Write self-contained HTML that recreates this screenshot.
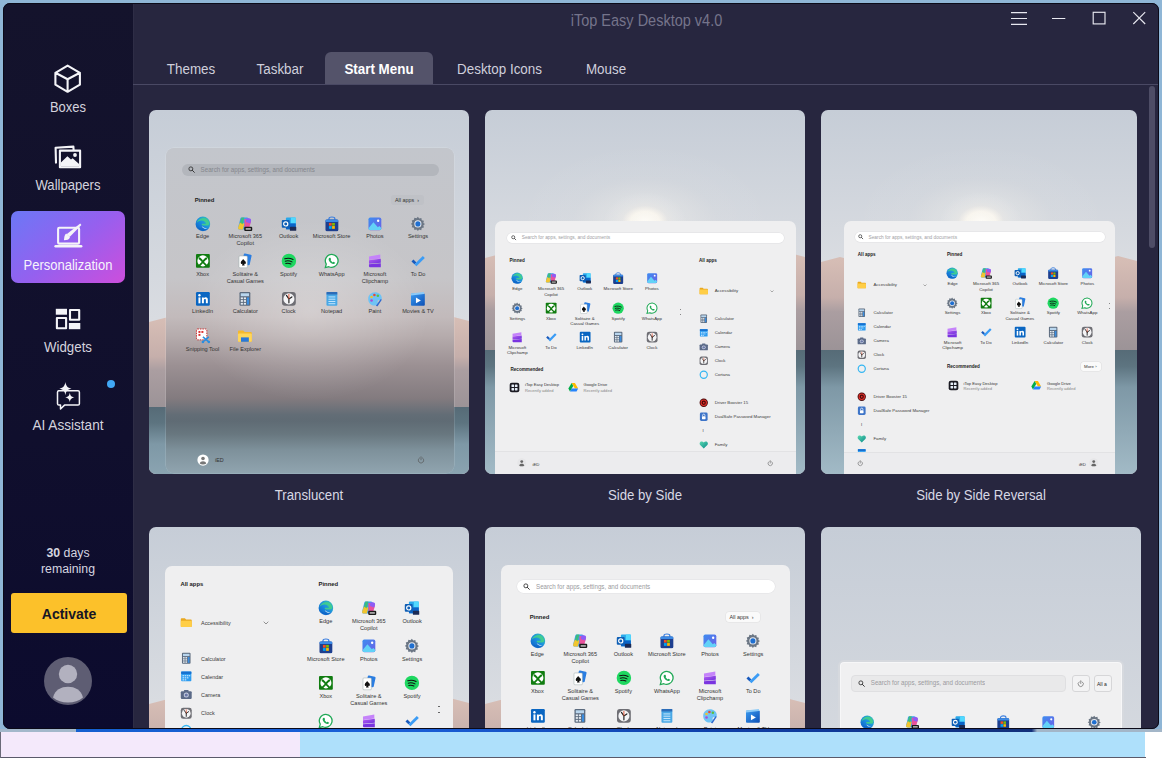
<!DOCTYPE html><html><head><meta charset="utf-8"><style>
*{margin:0;padding:0;box-sizing:border-box}
html,body{width:1162px;height:758px;overflow:hidden;background:#8fb6d6;font-family:"Liberation Sans",sans-serif}
.a{position:absolute}
svg.i{position:absolute;overflow:visible}
#bot1{left:0;top:729px;width:1162px;height:29px;background:#fff}
#lav{left:1px;top:732px;width:299px;height:25px;background:#f4e9fb}
#lblue{left:300px;top:732px;width:845px;height:25px;background:#aee0fb}
#bstrip{left:76px;top:729px;width:1086px;height:3px;background:linear-gradient(90deg,#1560d0,#1a5fd8 30%,#0f3fa8 60%,#12307a 88%,#a3b6c8 88.5%)}
#bstrip0{left:0;top:729px;width:76px;height:3px;background:#a3b8cb}
#bline{left:0;top:757px;width:1146px;height:1px;background:#5a5a6a}
#lgray{left:0;top:732px;width:1px;height:26px;background:#6a6a78}
#win{left:0;top:0;width:1162px;height:758px;clip-path:inset(3px 3px 29px 3px round 7px)}
#side{left:3px;top:3px;width:130px;height:726px;background:linear-gradient(#14132c,#100f2d 60%,#0c0b2e)}
#main{left:133px;top:3px;width:1026px;height:726px;background:#27263f}
#frame{left:3px;top:3px;width:1156px;height:726px;border:1px solid #0b0a18;border-radius:7px}
.title{left:133px;top:12px;width:1026px;text-align:center;color:#75748b;font-size:14.5px;padding-left:1px;transform:scaleY(1.1)}
.tab{top:52px;height:32px;color:#cfcfdc;font-size:13.4px;line-height:35px;text-align:center}
.tab span{display:inline-block;transform:scaleY(1.08);transform-origin:50% 75%}
.tabx{text-align:center}
.tabact{background:#54536a;border-radius:6px 6px 0 0;color:#fff;font-weight:bold}
#tabline{left:133px;top:84px;width:1026px;height:1px;background:#4a4964}
.nav{left:3px;width:130px;text-align:center;color:#d4d3de;font-size:13px;transform:scaleY(1.1);transform-origin:50% 75%}
.card{overflow:hidden;border-radius:7px}
.lbl{text-align:center;color:#d8d8e4;font-size:13.2px;transform:scaleY(1.12);transform-origin:50% 75%}
.t{position:absolute;white-space:nowrap;color:#2a2a2a;line-height:1}
.c{text-align:center}
</style></head><body>

<svg width="0" height="0" style="position:absolute">
<defs>
<linearGradient id="gEdge" x1="0" y1="1" x2="1" y2="0"><stop offset="0" stop-color="#0c59c2"/><stop offset="0.5" stop-color="#1a8fe0"/><stop offset="1" stop-color="#3cc9b0"/></linearGradient>
<linearGradient id="gCop" x1="0" y1="0" x2="1" y2="1"><stop offset="0" stop-color="#2f9bf0"/><stop offset="0.35" stop-color="#5ed06a"/><stop offset="0.55" stop-color="#f7c83a"/><stop offset="0.8" stop-color="#f055a8"/><stop offset="1" stop-color="#8a5cf0"/></linearGradient>
<linearGradient id="gPho" x1="0" y1="0" x2="1" y2="1"><stop offset="0" stop-color="#3d8ef0"/><stop offset="1" stop-color="#6c5ee6"/></linearGradient>
<linearGradient id="gClip" x1="0" y1="0" x2="1" y2="1"><stop offset="0" stop-color="#b65cf5"/><stop offset="1" stop-color="#6b2fd8"/></linearGradient>
<linearGradient id="gMov" x1="0" y1="0" x2="1" y2="1"><stop offset="0" stop-color="#3a9af0"/><stop offset="1" stop-color="#0d4fb5"/></linearGradient>
<linearGradient id="gFam" x1="0" y1="0" x2="1" y2="1"><stop offset="0" stop-color="#5ad8b0"/><stop offset="1" stop-color="#0a8a8a"/></linearGradient>
<symbol id="edge" viewBox="0 0 16 16"><circle cx="8" cy="8" r="7.4" fill="url(#gEdge)"/><path d="M1.2 7.2C1.8 3.5 4.6.8 8 .8c3.5 0 6.6 2.6 7 5.9.2 1.7-.8 3-2.6 3H7.3c0 1.9 1.7 3.1 3.7 3.1 1.2 0 2.3-.4 3.2-.9-1.2 1.9-3.4 3.2-6 3.2C4.5 15.1 2 12.9 2 10c0-2.4 1.9-4.2 4.2-4.2 1.6 0 3 .9 3.6 2.2" fill="none" stroke="none"/><path d="M7.6 9.6h4.6c1.6 0 2.5-1 2.2-2.5C13.8 4 11.2 2 8.2 2 5 2 2.4 4.2 1.5 7.3 2.6 5.6 4.5 4.6 6.6 4.6c2.3 0 4.2 1.4 4.6 3.2H7.3c-.4 0-.6.3-.5.7.1.4.4.7.8 1.1z" fill="#44d08a" opacity=".9"/><path d="M7.3 9.6c0 2 1.8 3.3 4 3.3 1 0 2-.3 2.8-.8-1.1 1.8-3 3-5.4 3-2.5 0-4.6-1.6-5.4-3.9.9 1 2.2 1.5 3.6 1.5-.4-.9-.2-2.1.4-3.1z" fill="#0a58c0" opacity=".5"/><path d="M6.8 9.8c.2 1.7 1.8 3 4 3 .9 0 1.7-.2 2.4-.6-.9.3-1.9.3-2.9 0-1.7-.5-3-1.4-3.5-2.4z" fill="#e8f6ff"/></symbol>
<symbol id="copilot" viewBox="0 0 16 16"><path d="M4.5 1.5h5.5c1.5 0 2.2 1 1.8 2.4L9.8 11.5c-.4 1.4-1.5 2.2-2.9 2.2H3c-1.5 0-2.2-1-1.8-2.4L3 4c.3-1.5 .6-2.5 1.5-2.5z" fill="#3aa0f0"/><path d="M1.2 11.3L3 6.5l4.5 1L6 13.7H3c-1.5 0-2.2-1-1.8-2.4z" fill="#f2c530"/><path d="M3 6.5l1.5-5h3l-1.8 7z" fill="#3ec26a" opacity=".85"/><path d="M7.5 3h4.4c1.6 0 2.6 1.2 2.2 2.7l-1.5 5.6c-.4 1.4-1.4 2.2-2.8 2.2H7.7z" fill="#e8529c"/><path d="M9.5 2.2h2.5c1.6 0 2.6 1.2 2.2 2.7L13.5 7.5 9 6z" fill="#8d5cf6"/><rect x="7.3" y="11" width="8.2" height="4.2" rx="1.2" fill="#1b1b1b"/><rect x="8.8" y="12.4" width="5.2" height="1.4" fill="#cfcfcf"/></symbol>
<symbol id="outlook" viewBox="0 0 16 16"><rect x="5" y="1.5" width="10" height="12" rx="1" fill="#28a8ea"/><rect x="10" y="1.5" width="5" height="6" fill="#50d9ff"/><rect x="5" y="7.5" width="10" height="6" fill="#0a64c8"/><rect x=".8" y="4" width="8" height="8" rx="1" fill="#0f5fb5"/><circle cx="4.8" cy="8" r="2.1" fill="none" stroke="#fff" stroke-width="1.2"/><rect x="9" y="11" width="6.5" height="4" rx=".6" fill="#1b2a55"/></symbol>
<symbol id="store" viewBox="0 0 16 16"><path d="M5 4V2.8C5 1.8 6 1 8 1s3 .8 3 1.8V4" fill="none" stroke="#3a7ee0" stroke-width="1.2"/><rect x="1.5" y="3.5" width="13" height="12" rx="1.6" fill="#1d3f8f"/><rect x="1.5" y="3.5" width="13" height="2.5" rx="1" fill="#3a8ae6"/><rect x="5" y="7" width="2.8" height="2.8" fill="#f25022"/><rect x="8.2" y="7" width="2.8" height="2.8" fill="#7fba00"/><rect x="5" y="10.2" width="2.8" height="2.8" fill="#00a4ef"/><rect x="8.2" y="10.2" width="2.8" height="2.8" fill="#ffb900"/></symbol>
<symbol id="photos" viewBox="0 0 16 16"><rect x="1.5" y="1.5" width="13" height="13" rx="1.8" fill="url(#gPho)"/><path d="M1.5 12.5l5-6.2 4.5 5.2 1.5-1.3 2 2v.3c0 1-.8 1.8-1.8 1.8H3.3c-1 0-1.8-.8-1.8-1.8z" fill="#62d2f7"/><circle cx="11.3" cy="4.8" r="1.2" fill="#fff"/></symbol>
<symbol id="settings" viewBox="0 0 16 16"><path d="M8 .8l1.3 1.8 2.2-.6.4 2.2 2.2.7-.6 2.2L15.2 8l-1.7 1.4.6 2.2-2.2.6-.5 2.3-2.2-.7L8 15.2l-1.3-1.6-2.2.7-.5-2.3-2.2-.6.6-2.2L.8 8l1.6-1.2-.6-2.2 2.2-.7.4-2.2 2.2.6z" fill="#6b7684"/><circle cx="8" cy="8" r="3.6" fill="#e8eaf0"/><circle cx="8" cy="8" r="2.6" fill="#1f6fd0"/></symbol>
<symbol id="xbox" viewBox="0 0 16 16"><rect x="1" y="1" width="14" height="14" rx="1" fill="#107c10"/><circle cx="8" cy="8" r="5.6" fill="#fff"/><path d="M4.2 4.2c2 .6 3 2.2 3.8 3.3.8-1.1 1.8-2.7 3.8-3.3L12.5 6c-1.6.8-2.8 2.2-3.3 3L12.6 12.5l-1.5 1.2C10 12.2 9 11 8 10.3 7 11 6 12.2 4.9 13.7L3.4 12.5 6.8 9c-.5-.8-1.7-2.2-3.3-3z" fill="#107c10"/></symbol>
<symbol id="solitaire" viewBox="0 0 16 16"><rect x="6" y="1" width="8" height="11" rx="1" fill="#2a7de1" transform="rotate(12 10 6)"/><rect x="2" y="3" width="8.5" height="12" rx="1" fill="#fff" stroke="#9aa" stroke-width=".5"/><path d="M6.2 6c1.5 1.8 2.8 2.5 2.8 3.8 0 1-.9 1.5-1.8 1.1l.6 1.8H5l.6-1.8c-.9.4-1.8-.1-1.8-1.1C3.8 8.5 4.9 7.8 6.2 6z" fill="#111"/></symbol>
<symbol id="spotify" viewBox="0 0 16 16"><circle cx="8" cy="8" r="7.3" fill="#1ed760"/><path d="M3.8 5.8c2.8-.9 5.8-.6 8.4.8M4.3 8.3c2.2-.7 4.6-.4 6.8.7M4.8 10.6c1.8-.5 3.5-.3 5.2.5" fill="none" stroke="#111" stroke-width="1.1" stroke-linecap="round"/></symbol>
<symbol id="whatsapp" viewBox="0 0 16 16"><path d="M8 1.3a6.6 6.6 0 00-5.7 10l-1 3.5 3.6-.9A6.6 6.6 0 108 1.3z" fill="#fff" stroke="#1fa855" stroke-width="1.3"/><path d="M5.6 5c.4-.4.8-.3 1 .1l.5 1.1c.1.3 0 .5-.2.7l-.3.3c.5 1 1.3 1.8 2.3 2.3l.3-.3c.2-.2.5-.3.7-.2l1.1.5c.4.2.5.6.1 1-.6.7-1.6.9-2.5.5-1.7-.7-3-2-3.7-3.7-.4-.9-.2-1.8.5-2.5z" fill="#1fa855"/></symbol>
<symbol id="clipchamp" viewBox="0 0 16 16"><path d="M2 3.5L13.5 1.5V5.5L2 7z" fill="#c583fa"/><path d="M2 7.3L14 5.8V10L2 11z" fill="url(#gClip)"/><path d="M2 11.3L14 10.3V14.5H3c-.6 0-1-.4-1-1z" fill="#7a34e0"/></symbol>
<symbol id="todo" viewBox="0 0 16 16"><path d="M1.5 8.5l2-2 3 3-2 2z" fill="#185abd"/><path d="M4.5 11.5L13 3l2 2-8.5 8.5z" fill="#3b9cf5"/></symbol>
<symbol id="linkedin" viewBox="0 0 16 16"><rect x="1" y="1" width="14" height="14" rx="1.2" fill="#0a66c2"/><rect x="3.5" y="6.5" width="2" height="6" fill="#fff"/><circle cx="4.5" cy="4.3" r="1.2" fill="#fff"/><path d="M7 6.5h1.9v.9c.4-.7 1.1-1.1 2-1.1 1.6 0 2.1 1 2.1 2.6v3.6h-2V9.3c0-.8-.2-1.3-.9-1.3-.8 0-1.1.6-1.1 1.4v3.1H7z" fill="#fff"/></symbol>
<symbol id="calculator" viewBox="0 0 16 16"><rect x="2.5" y="1" width="11" height="14" rx="1.2" fill="#5c6b7e"/><rect x="3.8" y="2.3" width="8.4" height="3" fill="#b9d6ee"/><g fill="#e6ecf2"><rect x="3.8" y="6.5" width="2.2" height="1.8"/><rect x="6.9" y="6.5" width="2.2" height="1.8"/><rect x="3.8" y="9.2" width="2.2" height="1.8"/><rect x="6.9" y="9.2" width="2.2" height="1.8"/><rect x="3.8" y="12" width="2.2" height="1.8"/><rect x="6.9" y="12" width="2.2" height="1.8"/></g><rect x="10" y="6.5" width="2.2" height="7.3" fill="#3b8de0"/></symbol>
<symbol id="clock" viewBox="0 0 16 16"><rect x="1" y="1" width="14" height="14" rx="3" fill="#6e6e74"/><circle cx="8" cy="8" r="5.6" fill="#f4f4f6"/><path d="M8 8L5.5 4.5M8 8l3-2M8 8v4" stroke="#222" stroke-width="1.2" stroke-linecap="round"/><path d="M8 8V3" stroke="#e04a2a" stroke-width=".9"/></symbol>
<symbol id="notepad" viewBox="0 0 16 16"><rect x="2.5" y="2" width="11" height="13" rx="1" fill="#49a8e6"/><rect x="2.5" y="1" width="11" height="2.5" fill="#2b6cb8"/><g stroke="#d8efff" stroke-width=".9"><path d="M4.5 6h7M4.5 8.3h7M4.5 10.6h7M4.5 12.9h7"/></g></symbol>
<symbol id="paint" viewBox="0 0 16 16"><path d="M8 1.2c3.9 0 7 2.6 7 6 0 2-1.4 2.6-2.6 2.3-1.2-.3-2 .4-1.6 1.6.5 1.8-.6 3.7-3 3.7-3.8 0-6.6-3-6.6-6.8S4 1.2 8 1.2z" fill="#6fc3f5"/><circle cx="4.6" cy="6" r="1.3" fill="#f2c12e"/><circle cx="7.5" cy="4" r="1.3" fill="#e8493a"/><circle cx="11" cy="4.8" r="1.3" fill="#5bbf3e"/><circle cx="4.6" cy="9.6" r="1.3" fill="#a74fd8"/><path d="M9 15l5-7 1 .8-4.5 7z" fill="#2d68d0"/></symbol>
<symbol id="movies" viewBox="0 0 16 16"><rect x="1" y="2.5" width="14" height="12.5" rx="1" fill="url(#gMov)"/><path d="M1 2.5l13-1.5.3 2L1 4.5z" fill="#8ccaf7"/><path d="M6 6.5v6l5-3z" fill="#fff"/></symbol>
<symbol id="snipping" viewBox="0 0 16 16"><rect x="1.5" y="1" width="10.5" height="11" rx="1" fill="#fff" stroke="#c33" stroke-width="1" stroke-dasharray="1.5 1"/><rect x="3.5" y="3" width="2" height="2" fill="#d33"/><rect x="6.5" y="3" width="2" height="2" fill="#d33"/><rect x="3.5" y="6" width="2" height="2" fill="#d33"/><path d="M8 9l6 5M14 9l-6 5" stroke="#2a8ee0" stroke-width="1.5"/><circle cx="8" cy="14.2" r="1.3" fill="#2a8ee0"/><circle cx="14" cy="14.2" r="1.3" fill="#2a8ee0"/></symbol>
<symbol id="explorer" viewBox="0 0 16 16"><path d="M1 3.5c0-.6.4-1 1-1h4.3l1.5 1.5H14c.6 0 1 .4 1 1V13c0 .6-.4 1-1 1H2c-.6 0-1-.4-1-1z" fill="#f5b92e"/><rect x="1" y="5.5" width="14" height="8.5" rx="1" fill="#ffd65a"/><rect x="4" y="9.5" width="8" height="4.5" fill="#2b78d8"/></symbol>
<symbol id="folder" viewBox="0 0 16 16"><path d="M1 4c0-.6.4-1 1-1h4.3l1.5 1.5H14c.6 0 1 .4 1 1V13c0 .6-.4 1-1 1H2c-.6 0-1-.4-1-1z" fill="#e9a820"/><rect x="1" y="6" width="14" height="8" rx="1" fill="#ffce47"/></symbol>
<symbol id="calendar" viewBox="0 0 16 16"><rect x="1.5" y="2" width="13" height="12.5" rx="1" fill="#2d9cf0"/><rect x="1.5" y="2" width="13" height="3" fill="#1670cf"/><g fill="#bfe3ff"><rect x="3.2" y="6.5" width="2" height="1.6"/><rect x="6" y="6.5" width="2" height="1.6"/><rect x="8.8" y="6.5" width="2" height="1.6"/><rect x="11.5" y="6.5" width="1.6" height="1.6"/><rect x="3.2" y="9.2" width="2" height="1.6"/><rect x="6" y="9.2" width="2" height="1.6"/><rect x="8.8" y="9.2" width="2" height="1.6"/><rect x="3.2" y="11.8" width="2" height="1.6"/><rect x="6" y="11.8" width="2" height="1.6"/></g></symbol>
<symbol id="camera" viewBox="0 0 16 16"><rect x="1" y="4" width="14" height="10" rx="1.5" fill="#5b6a88"/><rect x="5" y="2.5" width="6" height="2.5" rx=".8" fill="#5b6a88"/><circle cx="8" cy="9" r="3.2" fill="#c4cce0"/><circle cx="8" cy="9" r="2" fill="#6b78a8"/></symbol>
<symbol id="cortana" viewBox="0 0 16 16"><circle cx="8" cy="8" r="6" fill="none" stroke="#35b6f2" stroke-width="2"/></symbol>
<symbol id="driver" viewBox="0 0 16 16"><circle cx="8" cy="8" r="7" fill="#4a0a0a"/><circle cx="8" cy="8" r="4.5" fill="none" stroke="#e0302a" stroke-width="1.8"/><circle cx="8" cy="8" r="1.5" fill="#e0302a"/></symbol>
<symbol id="dualsafe" viewBox="0 0 16 16"><rect x="1.5" y="1" width="13" height="14" rx="2.5" fill="#3d74c8"/><rect x="5" y="7" width="6" height="5" rx=".8" fill="#fff"/><path d="M6 7V5.5a2 2 0 014 0V7" fill="none" stroke="#fff" stroke-width="1.2"/></symbol>
<symbol id="family" viewBox="0 0 16 16"><path d="M8 14.5L2 8.5C.5 7 .8 4.2 2.6 3.1 4.3 2 6.5 2.6 8 4.2c1.5-1.6 3.7-2.2 5.4-1.1 1.8 1.1 2.1 3.9.6 5.4z" fill="url(#gFam)"/></symbol>
<symbol id="itop" viewBox="0 0 16 16"><rect x="1" y="1" width="14" height="14" rx="3" fill="#1a1a22"/><g fill="#e6eef8"><rect x="3.6" y="3.6" width="3.8" height="3.8" rx=".6"/><rect x="8.6" y="3.6" width="3.8" height="3.8" rx=".6"/><rect x="3.6" y="8.6" width="3.8" height="3.8" rx=".6"/><rect x="8.6" y="8.6" width="3.8" height="3.8" rx=".6"/></g></symbol>
<symbol id="gdrive" viewBox="0 0 16 16"><path d="M5.5 1.5h5L15.5 10h-5z" fill="#ffba00"/><path d="M5.5 1.5L.5 10 3 14.5 8 6z" fill="#00ac47"/><path d="M3 14.5h10l2.5-4.5h-10z" fill="#2684fc"/></symbol>
<symbol id="power" viewBox="0 0 16 16"><path d="M5 3.8a5.5 5.5 0 106 0" fill="none" stroke="#555" stroke-width="1.3" stroke-linecap="round"/><path d="M8 1.5v6" stroke="#555" stroke-width="1.3" stroke-linecap="round"/></symbol>
<symbol id="search" viewBox="0 0 16 16"><circle cx="6.5" cy="6.5" r="4.5" fill="none" stroke="#333" stroke-width="2"/><path d="M10 10l4.5 4.5" stroke="#333" stroke-width="2.2" stroke-linecap="round"/></symbol>
<symbol id="user" viewBox="0 0 16 16"><circle cx="8" cy="8" r="7.5" fill="#fff"/><circle cx="8" cy="6" r="2.4" fill="#777"/><path d="M3.6 12.5c.6-2 2.3-3 4.4-3s3.8 1 4.4 3c-1.2 1-2.7 1.5-4.4 1.5s-3.2-.5-4.4-1.5z" fill="#777"/></symbol>
<symbol id="user2" viewBox="0 0 16 16"><circle cx="8" cy="8" r="7.5" fill="#e6e6e8"/><circle cx="8" cy="6" r="2.4" fill="#666"/><path d="M3.6 12.5c.6-2 2.3-3 4.4-3s3.8 1 4.4 3c-1.2 1-2.7 1.5-4.4 1.5s-3.2-.5-4.4-1.5z" fill="#666"/></symbol>
</defs></svg>

<div class="a" id="bot1"></div><div class="a" id="lav"></div><div class="a" id="lblue"></div><div class="a" id="bstrip"></div><div class="a" id="bstrip0"></div><div class="a" id="bline"></div><div class="a" id="lgray"></div>
<div class="a" id="win">
<div class="a" id="side"></div><div class="a" id="main"></div><div class="a" style="left:133px;top:3px;width:1px;height:726px;background:#2e2d46"></div>
<div class="a title">iTop Easy Desktop v4.0</div>
<div class="a tab" style="left:147px;width:88px"><span>Themes</span></div>
<div class="a tab" style="left:236px;width:88px"><span>Taskbar</span></div>
<div class="a tab tabact" style="left:325px;width:108px"><span>Start Menu</span></div>
<div class="a tab" style="left:433px;width:133px"><span>Desktop Icons</span></div>
<div class="a tab" style="left:566px;width:80px"><span>Mouse</span></div>
<div class="a" id="tabline"></div>
<svg class="a" style="left:1000px;top:0" width="160" height="40"><g stroke="#e8e8f0" stroke-width="1.15" fill="none"><path d="M11 12.6H27M11 18.5H27M11 24.4H27"/><path d="M52 18.5H65.3"/><rect x="93.2" y="12.3" width="11.8" height="11.6"/><path d="M133.3 12.2L145.2 24M145.2 12.2L133.3 24"/></g></svg>
<div class="a" style="left:1149px;top:86px;width:6px;height:162px;border-radius:3px;background:#4e4d66"></div>
<div class="a card" style="left:149px;top:110px;width:320px;height:364px">
<svg class="a" style="left:0px;top:0px" width="320" height="364">
<defs><linearGradient id="sky0" x1="0" y1="0" x2="0" y2="1"><stop offset="0" stop-color="#c6cdd7"/><stop offset="0.577" stop-color="#d9dce1"/><stop offset="1" stop-color="#d9dce1"/></linearGradient>
<radialGradient id="sun0"><stop offset="0" stop-color="#fffdf8" stop-opacity="1"/><stop offset=".35" stop-color="#fffaf0" stop-opacity=".85"/><stop offset=".55" stop-color="#fff6ea" stop-opacity=".25"/><stop offset="1" stop-color="#fff" stop-opacity="0"/></radialGradient>
<linearGradient id="dn0" x1="0" y1="210" x2="0" y2="301" gradientUnits="userSpaceOnUse"><stop offset="0" stop-color="#d6bdb5"/><stop offset=".4" stop-color="#c6afab"/><stop offset=".55" stop-color="#ab9ea1"/><stop offset="1" stop-color="#9a9296"/></linearGradient>
<linearGradient id="lk0" x1="0" y1="297" x2="0" y2="421" gradientUnits="userSpaceOnUse"><stop offset="0" stop-color="#566b77"/><stop offset=".13" stop-color="#5d7480"/><stop offset=".3" stop-color="#7e98a6"/><stop offset="1" stop-color="#a2bac6"/></linearGradient></defs>
<rect width="320" height="364" fill="url(#sky0)"/>
<ellipse cx="160" cy="150" rx="42" ry="30" fill="url(#sun0)" opacity=".95"/>
<ellipse cx="160" cy="150" rx="130" ry="80" fill="url(#sun0)" opacity=".22"/>
<path d="M0 212 L19.2 207 L64.0 218 L134.4 276 L185.6 276 L262.4 216 L300.79999999999995 206 L320 211 L320 301 L0 301z" fill="url(#dn0)"/>
<rect y="297" width="320" height="67" fill="url(#lk0)"/>
</svg>
</div>
<div class="a card" style="left:485px;top:110px;width:320px;height:364px">
<svg class="a" style="left:0px;top:0px" width="320" height="364">
<defs><linearGradient id="sky1" x1="0" y1="0" x2="0" y2="1"><stop offset="0" stop-color="#c6cdd7"/><stop offset="0.401" stop-color="#d9dce1"/><stop offset="1" stop-color="#d9dce1"/></linearGradient>
<radialGradient id="sun1"><stop offset="0" stop-color="#fffdf8" stop-opacity="1"/><stop offset=".35" stop-color="#fffaf0" stop-opacity=".85"/><stop offset=".55" stop-color="#fff6ea" stop-opacity=".25"/><stop offset="1" stop-color="#fff" stop-opacity="0"/></radialGradient>
<linearGradient id="dn1" x1="0" y1="146" x2="0" y2="244" gradientUnits="userSpaceOnUse"><stop offset="0" stop-color="#d6bdb5"/><stop offset=".4" stop-color="#c6afab"/><stop offset=".55" stop-color="#ab9ea1"/><stop offset="1" stop-color="#9a9296"/></linearGradient>
<linearGradient id="lk1" x1="0" y1="240" x2="0" y2="364" gradientUnits="userSpaceOnUse"><stop offset="0" stop-color="#566b77"/><stop offset=".13" stop-color="#5d7480"/><stop offset=".3" stop-color="#7e98a6"/><stop offset="1" stop-color="#a2bac6"/></linearGradient></defs>
<rect width="320" height="364" fill="url(#sky1)"/>
<ellipse cx="160" cy="112" rx="42" ry="30" fill="url(#sun1)" opacity=".95"/>
<ellipse cx="160" cy="112" rx="130" ry="80" fill="url(#sun1)" opacity=".22"/>
<path d="M0 148 L19.2 143 L64.0 154 L134.4 219 L185.6 219 L262.4 152 L300.79999999999995 142 L320 147 L320 244 L0 244z" fill="url(#dn1)"/>
<rect y="240" width="320" height="124" fill="url(#lk1)"/>
</svg>
</div>
<div class="a card" style="left:821px;top:110px;width:316px;height:364px">
<svg class="a" style="left:0px;top:0px" width="316" height="364">
<defs><linearGradient id="sky2" x1="0" y1="0" x2="0" y2="1"><stop offset="0" stop-color="#c6cdd7"/><stop offset="0.412" stop-color="#d9dce1"/><stop offset="1" stop-color="#d9dce1"/></linearGradient>
<radialGradient id="sun2"><stop offset="0" stop-color="#fffdf8" stop-opacity="1"/><stop offset=".35" stop-color="#fffaf0" stop-opacity=".85"/><stop offset=".55" stop-color="#fff6ea" stop-opacity=".25"/><stop offset="1" stop-color="#fff" stop-opacity="0"/></radialGradient>
<linearGradient id="dn2" x1="0" y1="150" x2="0" y2="244" gradientUnits="userSpaceOnUse"><stop offset="0" stop-color="#d6bdb5"/><stop offset=".4" stop-color="#c6afab"/><stop offset=".55" stop-color="#ab9ea1"/><stop offset="1" stop-color="#9a9296"/></linearGradient>
<linearGradient id="lk2" x1="0" y1="240" x2="0" y2="364" gradientUnits="userSpaceOnUse"><stop offset="0" stop-color="#566b77"/><stop offset=".13" stop-color="#5d7480"/><stop offset=".3" stop-color="#7e98a6"/><stop offset="1" stop-color="#a2bac6"/></linearGradient></defs>
<rect width="316" height="364" fill="url(#sky2)"/>
<ellipse cx="160" cy="112" rx="42" ry="30" fill="url(#sun2)" opacity=".95"/>
<ellipse cx="160" cy="112" rx="130" ry="80" fill="url(#sun2)" opacity=".22"/>
<path d="M0 152 L18.96 147 L63.2 158 L132.72 219 L183.28 219 L259.12 156 L297.03999999999996 146 L316 151 L316 244 L0 244z" fill="url(#dn2)"/>
<rect y="240" width="316" height="124" fill="url(#lk2)"/>
</svg>
</div>
<div class="a card" style="left:149px;top:527px;width:320px;height:364px">
<svg class="a" style="left:0px;top:0px" width="320" height="364">
<defs><linearGradient id="sky3" x1="0" y1="0" x2="0" y2="1"><stop offset="0" stop-color="#c6cdd7"/><stop offset="0.481" stop-color="#d9dce1"/><stop offset="1" stop-color="#d9dce1"/></linearGradient>
<radialGradient id="sun3"><stop offset="0" stop-color="#fffdf8" stop-opacity="1"/><stop offset=".35" stop-color="#fffaf0" stop-opacity=".85"/><stop offset=".55" stop-color="#fff6ea" stop-opacity=".25"/><stop offset="1" stop-color="#fff" stop-opacity="0"/></radialGradient>
<linearGradient id="dn3" x1="0" y1="175" x2="0" y2="262" gradientUnits="userSpaceOnUse"><stop offset="0" stop-color="#d6bdb5"/><stop offset=".4" stop-color="#c6afab"/><stop offset=".55" stop-color="#ab9ea1"/><stop offset="1" stop-color="#9a9296"/></linearGradient>
<linearGradient id="lk3" x1="0" y1="258" x2="0" y2="382" gradientUnits="userSpaceOnUse"><stop offset="0" stop-color="#566b77"/><stop offset=".13" stop-color="#5d7480"/><stop offset=".3" stop-color="#7e98a6"/><stop offset="1" stop-color="#a2bac6"/></linearGradient></defs>
<rect width="320" height="364" fill="url(#sky3)"/>
<ellipse cx="160" cy="150" rx="42" ry="30" fill="url(#sun3)" opacity=".95"/>
<ellipse cx="160" cy="150" rx="130" ry="80" fill="url(#sun3)" opacity=".22"/>
<path d="M0 177 L19.2 172 L64.0 183 L134.4 237 L185.6 237 L262.4 181 L300.79999999999995 171 L320 176 L320 262 L0 262z" fill="url(#dn3)"/>
<rect y="258" width="320" height="106" fill="url(#lk3)"/>
</svg>
</div>
<div class="a card" style="left:485px;top:527px;width:320px;height:364px">
<svg class="a" style="left:0px;top:0px" width="320" height="364">
<defs><linearGradient id="sky4" x1="0" y1="0" x2="0" y2="1"><stop offset="0" stop-color="#c6cdd7"/><stop offset="0.481" stop-color="#d9dce1"/><stop offset="1" stop-color="#d9dce1"/></linearGradient>
<radialGradient id="sun4"><stop offset="0" stop-color="#fffdf8" stop-opacity="1"/><stop offset=".35" stop-color="#fffaf0" stop-opacity=".85"/><stop offset=".55" stop-color="#fff6ea" stop-opacity=".25"/><stop offset="1" stop-color="#fff" stop-opacity="0"/></radialGradient>
<linearGradient id="dn4" x1="0" y1="175" x2="0" y2="262" gradientUnits="userSpaceOnUse"><stop offset="0" stop-color="#d6bdb5"/><stop offset=".4" stop-color="#c6afab"/><stop offset=".55" stop-color="#ab9ea1"/><stop offset="1" stop-color="#9a9296"/></linearGradient>
<linearGradient id="lk4" x1="0" y1="258" x2="0" y2="382" gradientUnits="userSpaceOnUse"><stop offset="0" stop-color="#566b77"/><stop offset=".13" stop-color="#5d7480"/><stop offset=".3" stop-color="#7e98a6"/><stop offset="1" stop-color="#a2bac6"/></linearGradient></defs>
<rect width="320" height="364" fill="url(#sky4)"/>
<ellipse cx="160" cy="150" rx="42" ry="30" fill="url(#sun4)" opacity=".95"/>
<ellipse cx="160" cy="150" rx="130" ry="80" fill="url(#sun4)" opacity=".22"/>
<path d="M0 177 L19.2 172 L64.0 183 L134.4 237 L185.6 237 L262.4 181 L300.79999999999995 171 L320 176 L320 262 L0 262z" fill="url(#dn4)"/>
<rect y="258" width="320" height="106" fill="url(#lk4)"/>
</svg>
</div>
<div class="a card" style="left:821px;top:527px;width:320px;height:364px">
<svg class="a" style="left:0px;top:0px" width="320" height="364">
<defs><linearGradient id="sky5" x1="0" y1="0" x2="0" y2="1"><stop offset="0" stop-color="#c6cdd7"/><stop offset="0.755" stop-color="#d9dce1"/><stop offset="1" stop-color="#d9dce1"/></linearGradient>
<radialGradient id="sun5"><stop offset="0" stop-color="#fffdf8" stop-opacity="1"/><stop offset=".35" stop-color="#fffaf0" stop-opacity=".85"/><stop offset=".55" stop-color="#fff6ea" stop-opacity=".25"/><stop offset="1" stop-color="#fff" stop-opacity="0"/></radialGradient>
<linearGradient id="dn5" x1="0" y1="275" x2="0" y2="330" gradientUnits="userSpaceOnUse"><stop offset="0" stop-color="#d6bdb5"/><stop offset=".4" stop-color="#c6afab"/><stop offset=".55" stop-color="#ab9ea1"/><stop offset="1" stop-color="#9a9296"/></linearGradient>
<linearGradient id="lk5" x1="0" y1="326" x2="0" y2="450" gradientUnits="userSpaceOnUse"><stop offset="0" stop-color="#566b77"/><stop offset=".13" stop-color="#5d7480"/><stop offset=".3" stop-color="#7e98a6"/><stop offset="1" stop-color="#a2bac6"/></linearGradient></defs>
<rect width="320" height="364" fill="url(#sky5)"/>
<ellipse cx="160" cy="420" rx="42" ry="30" fill="url(#sun5)" opacity=".95"/>
<ellipse cx="160" cy="420" rx="130" ry="80" fill="url(#sun5)" opacity=".22"/>
<path d="M0 277 L19.2 272 L64.0 283 L134.4 305 L185.6 305 L262.4 281 L300.79999999999995 271 L320 276 L320 330 L0 330z" fill="url(#dn5)"/>
<rect y="326" width="320" height="38" fill="url(#lk5)"/>
</svg>
</div>
<div class="a" style="left:166px;top:148px;width:288px;height:325px;border-radius:8px;background:radial-gradient(ellipse 120px 90px at 50% 50%,rgba(255,255,255,.28),rgba(255,255,255,0)),linear-gradient(#c3c6cc 0%,#c6c5c8 40%,#c2babb 52%,#b5abac 58%,#9b9093 67%,#837b7f 77%,#636d76 82%,#5f6b74 84%,#68777f 88%,#7e919b 93%,#90a4af 100%);box-shadow:0 0 0 .5px rgba(255,255,255,.25)"></div>
<div class="a" style="left:181.5px;top:163.5px;width:257.5px;height:12.5px;border-radius:6px;background:#b3b6bc"></div>
<svg class="i" style="left:188.00px;top:166.30px" width="7.00" height="7.00"><use href="#search"/></svg>
<div class="t" style="left:200.60px;top:166.89px;font-size:6.20px;color:#85878d;transform:scaleY(1.12)">Search for apps, settings, and documents</div>
<div class="t" style="left:194.70px;top:197.99px;font-size:5.90px;color:#222;font-weight:bold;">Pinned</div>
<div class="a" style="left:391px;top:195px;width:33px;height:10px;border-radius:3px;background:#bfc1c6"></div>
<div class="t" style="left:395.00px;top:198.16px;font-size:5.40px;color:#333;">All apps &nbsp;›</div>
<svg class="i" style="left:194.70px;top:215.60px" width="15.80" height="15.80"><use href="#edge"/></svg>
<div class="t c" style="left:162.60px;width:80px;top:233.40px;font-size:5.60px;line-height:7.10px;color:#333">Edge</div>
<svg class="i" style="left:237.40px;top:215.60px" width="15.80" height="15.80"><use href="#copilot"/></svg>
<div class="t c" style="left:205.30px;width:80px;top:233.40px;font-size:5.60px;line-height:7.10px;color:#333">Microsoft 365<br>Copilot</div>
<svg class="i" style="left:280.70px;top:215.60px" width="15.80" height="15.80"><use href="#outlook"/></svg>
<div class="t c" style="left:248.60px;width:80px;top:233.40px;font-size:5.60px;line-height:7.10px;color:#333">Outlook</div>
<svg class="i" style="left:323.70px;top:215.60px" width="15.80" height="15.80"><use href="#store"/></svg>
<div class="t c" style="left:291.60px;width:80px;top:233.40px;font-size:5.60px;line-height:7.10px;color:#333">Microsoft Store</div>
<svg class="i" style="left:367.00px;top:215.60px" width="15.80" height="15.80"><use href="#photos"/></svg>
<div class="t c" style="left:334.90px;width:80px;top:233.40px;font-size:5.60px;line-height:7.10px;color:#333">Photos</div>
<svg class="i" style="left:410.10px;top:215.60px" width="15.80" height="15.80"><use href="#settings"/></svg>
<div class="t c" style="left:378.00px;width:80px;top:233.40px;font-size:5.60px;line-height:7.10px;color:#333">Settings</div>
<svg class="i" style="left:194.70px;top:253.10px" width="15.80" height="15.80"><use href="#xbox"/></svg>
<div class="t c" style="left:162.60px;width:80px;top:270.90px;font-size:5.60px;line-height:7.10px;color:#333">Xbox</div>
<svg class="i" style="left:237.40px;top:253.10px" width="15.80" height="15.80"><use href="#solitaire"/></svg>
<div class="t c" style="left:205.30px;width:80px;top:270.90px;font-size:5.60px;line-height:7.10px;color:#333">Solitaire &amp;<br>Casual Games</div>
<svg class="i" style="left:280.70px;top:253.10px" width="15.80" height="15.80"><use href="#spotify"/></svg>
<div class="t c" style="left:248.60px;width:80px;top:270.90px;font-size:5.60px;line-height:7.10px;color:#333">Spotify</div>
<svg class="i" style="left:323.70px;top:253.10px" width="15.80" height="15.80"><use href="#whatsapp"/></svg>
<div class="t c" style="left:291.60px;width:80px;top:270.90px;font-size:5.60px;line-height:7.10px;color:#333">WhatsApp</div>
<svg class="i" style="left:367.00px;top:253.10px" width="15.80" height="15.80"><use href="#clipchamp"/></svg>
<div class="t c" style="left:334.90px;width:80px;top:270.90px;font-size:5.60px;line-height:7.10px;color:#333">Microsoft<br>Clipchamp</div>
<svg class="i" style="left:410.10px;top:253.10px" width="15.80" height="15.80"><use href="#todo"/></svg>
<div class="t c" style="left:378.00px;width:80px;top:270.90px;font-size:5.60px;line-height:7.10px;color:#333">To Do</div>
<svg class="i" style="left:194.70px;top:290.60px" width="15.80" height="15.80"><use href="#linkedin"/></svg>
<div class="t c" style="left:162.60px;width:80px;top:308.40px;font-size:5.60px;line-height:7.10px;color:#333">LinkedIn</div>
<svg class="i" style="left:237.40px;top:290.60px" width="15.80" height="15.80"><use href="#calculator"/></svg>
<div class="t c" style="left:205.30px;width:80px;top:308.40px;font-size:5.60px;line-height:7.10px;color:#333">Calculator</div>
<svg class="i" style="left:280.70px;top:290.60px" width="15.80" height="15.80"><use href="#clock"/></svg>
<div class="t c" style="left:248.60px;width:80px;top:308.40px;font-size:5.60px;line-height:7.10px;color:#333">Clock</div>
<svg class="i" style="left:323.70px;top:290.60px" width="15.80" height="15.80"><use href="#notepad"/></svg>
<div class="t c" style="left:291.60px;width:80px;top:308.40px;font-size:5.60px;line-height:7.10px;color:#333">Notepad</div>
<svg class="i" style="left:367.00px;top:290.60px" width="15.80" height="15.80"><use href="#paint"/></svg>
<div class="t c" style="left:334.90px;width:80px;top:308.40px;font-size:5.60px;line-height:7.10px;color:#333">Paint</div>
<svg class="i" style="left:410.10px;top:290.60px" width="15.80" height="15.80"><use href="#movies"/></svg>
<div class="t c" style="left:378.00px;width:80px;top:308.40px;font-size:5.60px;line-height:7.10px;color:#333">Movies &amp; TV</div>
<svg class="i" style="left:194.70px;top:328.10px" width="15.80" height="15.80"><use href="#snipping"/></svg>
<div class="t c" style="left:162.60px;width:80px;top:345.90px;font-size:5.60px;line-height:7.10px;color:#333">Snipping Tool</div>
<svg class="i" style="left:237.40px;top:328.10px" width="15.80" height="15.80"><use href="#explorer"/></svg>
<div class="t c" style="left:205.30px;width:80px;top:345.90px;font-size:5.60px;line-height:7.10px;color:#333">File Explorer</div>
<svg class="i" style="left:196.50px;top:453.50px" width="12.00" height="12.00"><use href="#user"/></svg>
<div class="t" style="left:215.00px;top:457.66px;font-size:5.40px;color:#333;">iED</div>
<svg class="i" style="left:417.00px;top:455.50px" width="8.00" height="8.00"><use href="#power"/></svg>
<div class="a" style="left:495px;top:220.5px;width:300.5px;height:253.5px;background:#efeff0;border-radius:7px 7px 0 0;"></div>
<div class="a" style="left:506.5px;top:232.5px;width:277px;height:10px;border-radius:5px;background:#fff;box-shadow:0 0 0 .5px #e0e0e2"></div>
<svg class="i" style="left:510.75px;top:234.75px" width="5.50" height="5.50"><use href="#search"/></svg>
<div class="t" style="left:521.70px;top:235.97px;font-size:4.80px;color:#a0a0a4;">Search for apps, settings, and documents</div>
<div class="t" style="left:509.50px;top:258.74px;font-size:4.60px;color:#222;font-weight:bold;">Pinned</div>
<svg class="i" style="left:511.14px;top:272.34px" width="12.32" height="12.32"><use href="#edge"/></svg>
<div class="t c" style="left:477.30px;width:80px;top:286.22px;font-size:4.37px;line-height:5.54px;color:#333">Edge</div>
<svg class="i" style="left:544.84px;top:272.34px" width="12.32" height="12.32"><use href="#copilot"/></svg>
<div class="t c" style="left:511.00px;width:80px;top:286.22px;font-size:4.37px;line-height:5.54px;color:#333">Microsoft 365<br>Copilot</div>
<svg class="i" style="left:578.54px;top:272.34px" width="12.32" height="12.32"><use href="#outlook"/></svg>
<div class="t c" style="left:544.70px;width:80px;top:286.22px;font-size:4.37px;line-height:5.54px;color:#333">Outlook</div>
<svg class="i" style="left:612.04px;top:272.34px" width="12.32" height="12.32"><use href="#store"/></svg>
<div class="t c" style="left:578.20px;width:80px;top:286.22px;font-size:4.37px;line-height:5.54px;color:#333">Microsoft Store</div>
<svg class="i" style="left:645.74px;top:272.34px" width="12.32" height="12.32"><use href="#photos"/></svg>
<div class="t c" style="left:611.90px;width:80px;top:286.22px;font-size:4.37px;line-height:5.54px;color:#333">Photos</div>
<svg class="i" style="left:511.14px;top:301.64px" width="12.32" height="12.32"><use href="#settings"/></svg>
<div class="t c" style="left:477.30px;width:80px;top:315.52px;font-size:4.37px;line-height:5.54px;color:#333">Settings</div>
<svg class="i" style="left:544.84px;top:301.64px" width="12.32" height="12.32"><use href="#xbox"/></svg>
<div class="t c" style="left:511.00px;width:80px;top:315.52px;font-size:4.37px;line-height:5.54px;color:#333">Xbox</div>
<svg class="i" style="left:578.54px;top:301.64px" width="12.32" height="12.32"><use href="#solitaire"/></svg>
<div class="t c" style="left:544.70px;width:80px;top:315.52px;font-size:4.37px;line-height:5.54px;color:#333">Solitaire &amp;<br>Casual Games</div>
<svg class="i" style="left:612.04px;top:301.64px" width="12.32" height="12.32"><use href="#spotify"/></svg>
<div class="t c" style="left:578.20px;width:80px;top:315.52px;font-size:4.37px;line-height:5.54px;color:#333">Spotify</div>
<svg class="i" style="left:645.74px;top:301.64px" width="12.32" height="12.32"><use href="#whatsapp"/></svg>
<div class="t c" style="left:611.90px;width:80px;top:315.52px;font-size:4.37px;line-height:5.54px;color:#333">WhatsApp</div>
<svg class="i" style="left:511.14px;top:330.94px" width="12.32" height="12.32"><use href="#clipchamp"/></svg>
<div class="t c" style="left:477.30px;width:80px;top:344.82px;font-size:4.37px;line-height:5.54px;color:#333">Microsoft<br>Clipchamp</div>
<svg class="i" style="left:544.84px;top:330.94px" width="12.32" height="12.32"><use href="#todo"/></svg>
<div class="t c" style="left:511.00px;width:80px;top:344.82px;font-size:4.37px;line-height:5.54px;color:#333">To Do</div>
<svg class="i" style="left:578.54px;top:330.94px" width="12.32" height="12.32"><use href="#linkedin"/></svg>
<div class="t c" style="left:544.70px;width:80px;top:344.82px;font-size:4.37px;line-height:5.54px;color:#333">LinkedIn</div>
<svg class="i" style="left:612.04px;top:330.94px" width="12.32" height="12.32"><use href="#calculator"/></svg>
<div class="t c" style="left:578.20px;width:80px;top:344.82px;font-size:4.37px;line-height:5.54px;color:#333">Calculator</div>
<svg class="i" style="left:645.74px;top:330.94px" width="12.32" height="12.32"><use href="#clock"/></svg>
<div class="t c" style="left:611.90px;width:80px;top:344.82px;font-size:4.37px;line-height:5.54px;color:#333">Clock</div>
<div class="a" style="left:679.5px;top:309px;width:1.4px;height:1.4px;border-radius:50%;background:#666"></div><div class="a" style="left:679.5px;top:314px;width:1.4px;height:1.4px;border-radius:50%;background:#666"></div>
<div class="t" style="left:510.50px;top:368.44px;font-size:4.60px;color:#222;font-weight:bold;">Recommended</div>
<svg class="i" style="left:508.50px;top:381.80px" width="11.00" height="11.00"><use href="#itop"/></svg>
<div class="t" style="left:525.00px;top:383.41px;font-size:4.10px;color:#333;">iTop Easy Desktop</div>
<div class="t" style="left:525.00px;top:389.01px;font-size:4.10px;color:#888;">Recently added</div>
<svg class="i" style="left:567.75px;top:382.05px" width="10.50" height="10.50"><use href="#gdrive"/></svg>
<div class="t" style="left:583.50px;top:383.41px;font-size:4.10px;color:#333;">Google Drive</div>
<div class="t" style="left:583.50px;top:389.01px;font-size:4.10px;color:#888;">Recently added</div>
<div class="t" style="left:699.00px;top:259.44px;font-size:4.60px;color:#222;font-weight:bold;">All apps</div>
<svg class="i" style="left:699.05px;top:285.85px" width="9.50" height="9.50"><use href="#folder"/></svg>
<div class="t" style="left:714.70px;top:289.14px;font-size:4.30px;color:#3a3a3a;">Accessibility</div>
<svg class="i" style="left:699.05px;top:313.75px" width="9.50" height="9.50"><use href="#calculator"/></svg>
<div class="t" style="left:714.70px;top:317.04px;font-size:4.30px;color:#3a3a3a;">Calculator</div>
<svg class="i" style="left:699.05px;top:327.95px" width="9.50" height="9.50"><use href="#calendar"/></svg>
<div class="t" style="left:714.70px;top:331.24px;font-size:4.30px;color:#3a3a3a;">Calendar</div>
<svg class="i" style="left:699.05px;top:341.85px" width="9.50" height="9.50"><use href="#camera"/></svg>
<div class="t" style="left:714.70px;top:345.14px;font-size:4.30px;color:#3a3a3a;">Camera</div>
<svg class="i" style="left:699.05px;top:355.75px" width="9.50" height="9.50"><use href="#clock"/></svg>
<div class="t" style="left:714.70px;top:359.04px;font-size:4.30px;color:#3a3a3a;">Clock</div>
<svg class="i" style="left:699.05px;top:370.05px" width="9.50" height="9.50"><use href="#cortana"/></svg>
<div class="t" style="left:714.70px;top:373.34px;font-size:4.30px;color:#3a3a3a;">Cortana</div>
<svg class="i" style="left:699.05px;top:397.95px" width="9.50" height="9.50"><use href="#driver"/></svg>
<div class="t" style="left:714.70px;top:401.24px;font-size:4.30px;color:#3a3a3a;">Driver Booster 15</div>
<svg class="i" style="left:699.05px;top:411.85px" width="9.50" height="9.50"><use href="#dualsafe"/></svg>
<div class="t" style="left:714.70px;top:415.14px;font-size:4.30px;color:#3a3a3a;">DualSafe Password Manager</div>
<div class="t" style="left:702.50px;top:428.94px;font-size:4.30px;color:#3a3a3a;">I</div>
<svg class="i" style="left:699.05px;top:439.95px" width="9.50" height="9.50"><use href="#family"/></svg>
<div class="t" style="left:714.70px;top:443.24px;font-size:4.30px;color:#3a3a3a;">Family</div>
<svg class="a" style="left:770px;top:289.5px" width="4" height="3"><path d="M.5 .5L2 2 3.5 .5" fill="none" stroke="#777" stroke-width=".6"/></svg>
<div class="a" style="left:495px;top:451px;width:300.5px;height:1px;background:#e2e2e4"></div>
<div class="a" style="left:495px;top:452px;width:300.5px;height:22px;background:#ececee"></div>
<svg class="i" style="left:516.75px;top:458.25px" width="9.50" height="9.50"><use href="#user2"/></svg>
<div class="t" style="left:532.50px;top:462.84px;font-size:4.30px;color:#333;">iED</div>
<svg class="i" style="left:766.75px;top:459.75px" width="6.50" height="6.50"><use href="#power"/></svg>
<div class="a" style="left:843.5px;top:220.7px;width:271px;height:253.3px;background:#efeff0;border-radius:7px 7px 0 0;"></div>
<div class="a" style="left:854.5px;top:232px;width:250px;height:10px;border-radius:5px;background:#fff;box-shadow:0 0 0 .5px #e0e0e2"></div>
<svg class="i" style="left:858.25px;top:234.25px" width="5.50" height="5.50"><use href="#search"/></svg>
<div class="t" style="left:868.50px;top:235.57px;font-size:4.80px;color:#a0a0a4;">Search for apps, settings, and documents</div>
<div class="t" style="left:857.80px;top:253.44px;font-size:4.60px;color:#222;font-weight:bold;">All apps</div>
<svg class="i" style="left:857.45px;top:280.15px" width="9.50" height="9.50"><use href="#folder"/></svg>
<div class="t" style="left:873.50px;top:283.44px;font-size:4.30px;color:#3a3a3a;">Accessibility</div>
<svg class="i" style="left:857.45px;top:307.95px" width="9.50" height="9.50"><use href="#calculator"/></svg>
<div class="t" style="left:873.50px;top:311.24px;font-size:4.30px;color:#3a3a3a;">Calculator</div>
<svg class="i" style="left:857.45px;top:321.85px" width="9.50" height="9.50"><use href="#calendar"/></svg>
<div class="t" style="left:873.50px;top:325.14px;font-size:4.30px;color:#3a3a3a;">Calendar</div>
<svg class="i" style="left:857.45px;top:336.05px" width="9.50" height="9.50"><use href="#camera"/></svg>
<div class="t" style="left:873.50px;top:339.34px;font-size:4.30px;color:#3a3a3a;">Camera</div>
<svg class="i" style="left:857.45px;top:349.95px" width="9.50" height="9.50"><use href="#clock"/></svg>
<div class="t" style="left:873.50px;top:353.24px;font-size:4.30px;color:#3a3a3a;">Clock</div>
<svg class="i" style="left:857.45px;top:364.05px" width="9.50" height="9.50"><use href="#cortana"/></svg>
<div class="t" style="left:873.50px;top:367.34px;font-size:4.30px;color:#3a3a3a;">Cortana</div>
<svg class="i" style="left:857.45px;top:391.95px" width="9.50" height="9.50"><use href="#driver"/></svg>
<div class="t" style="left:873.50px;top:395.24px;font-size:4.30px;color:#3a3a3a;">Driver Booster 15</div>
<svg class="i" style="left:857.45px;top:406.05px" width="9.50" height="9.50"><use href="#dualsafe"/></svg>
<div class="t" style="left:873.50px;top:409.34px;font-size:4.30px;color:#3a3a3a;">DualSafe Password Manager</div>
<div class="t" style="left:861.00px;top:423.14px;font-size:4.30px;color:#3a3a3a;">I</div>
<svg class="i" style="left:857.45px;top:434.15px" width="9.50" height="9.50"><use href="#family"/></svg>
<div class="t" style="left:873.50px;top:437.44px;font-size:4.30px;color:#3a3a3a;">Family</div>
<svg class="i" style="left:857.45px;top:447.75px" width="9.50" height="9.50"><use href="#calendar"/></svg>
<div class="t" style="left:873.50px;top:451.04px;font-size:4.30px;color:#3a3a3a;"></div>
<svg class="a" style="left:922.5px;top:284px" width="4" height="3"><path d="M.5 .5L2 2 3.5 .5" fill="none" stroke="#777" stroke-width=".6"/></svg>
<div class="t" style="left:947.00px;top:253.44px;font-size:4.60px;color:#222;font-weight:bold;">Pinned</div>
<svg class="i" style="left:946.44px;top:267.34px" width="12.32" height="12.32"><use href="#edge"/></svg>
<div class="t c" style="left:912.60px;width:80px;top:281.22px;font-size:4.37px;line-height:5.54px;color:#333">Edge</div>
<svg class="i" style="left:979.84px;top:267.34px" width="12.32" height="12.32"><use href="#copilot"/></svg>
<div class="t c" style="left:946.00px;width:80px;top:281.22px;font-size:4.37px;line-height:5.54px;color:#333">Microsoft 365<br>Copilot</div>
<svg class="i" style="left:1013.74px;top:267.34px" width="12.32" height="12.32"><use href="#outlook"/></svg>
<div class="t c" style="left:979.90px;width:80px;top:281.22px;font-size:4.37px;line-height:5.54px;color:#333">Outlook</div>
<svg class="i" style="left:1047.24px;top:267.34px" width="12.32" height="12.32"><use href="#store"/></svg>
<div class="t c" style="left:1013.40px;width:80px;top:281.22px;font-size:4.37px;line-height:5.54px;color:#333">Microsoft Store</div>
<svg class="i" style="left:1081.14px;top:267.34px" width="12.32" height="12.32"><use href="#photos"/></svg>
<div class="t c" style="left:1047.30px;width:80px;top:281.22px;font-size:4.37px;line-height:5.54px;color:#333">Photos</div>
<svg class="i" style="left:946.44px;top:296.54px" width="12.32" height="12.32"><use href="#settings"/></svg>
<div class="t c" style="left:912.60px;width:80px;top:310.42px;font-size:4.37px;line-height:5.54px;color:#333">Settings</div>
<svg class="i" style="left:979.84px;top:296.54px" width="12.32" height="12.32"><use href="#xbox"/></svg>
<div class="t c" style="left:946.00px;width:80px;top:310.42px;font-size:4.37px;line-height:5.54px;color:#333">Xbox</div>
<svg class="i" style="left:1013.74px;top:296.54px" width="12.32" height="12.32"><use href="#solitaire"/></svg>
<div class="t c" style="left:979.90px;width:80px;top:310.42px;font-size:4.37px;line-height:5.54px;color:#333">Solitaire &amp;<br>Casual Games</div>
<svg class="i" style="left:1047.24px;top:296.54px" width="12.32" height="12.32"><use href="#spotify"/></svg>
<div class="t c" style="left:1013.40px;width:80px;top:310.42px;font-size:4.37px;line-height:5.54px;color:#333">Spotify</div>
<svg class="i" style="left:1081.14px;top:296.54px" width="12.32" height="12.32"><use href="#whatsapp"/></svg>
<div class="t c" style="left:1047.30px;width:80px;top:310.42px;font-size:4.37px;line-height:5.54px;color:#333">WhatsApp</div>
<svg class="i" style="left:946.44px;top:325.84px" width="12.32" height="12.32"><use href="#clipchamp"/></svg>
<div class="t c" style="left:912.60px;width:80px;top:339.72px;font-size:4.37px;line-height:5.54px;color:#333">Microsoft<br>Clipchamp</div>
<svg class="i" style="left:979.84px;top:325.84px" width="12.32" height="12.32"><use href="#todo"/></svg>
<div class="t c" style="left:946.00px;width:80px;top:339.72px;font-size:4.37px;line-height:5.54px;color:#333">To Do</div>
<svg class="i" style="left:1013.74px;top:325.84px" width="12.32" height="12.32"><use href="#linkedin"/></svg>
<div class="t c" style="left:979.90px;width:80px;top:339.72px;font-size:4.37px;line-height:5.54px;color:#333">LinkedIn</div>
<svg class="i" style="left:1047.24px;top:325.84px" width="12.32" height="12.32"><use href="#calculator"/></svg>
<div class="t c" style="left:1013.40px;width:80px;top:339.72px;font-size:4.37px;line-height:5.54px;color:#333">Calculator</div>
<svg class="i" style="left:1081.14px;top:325.84px" width="12.32" height="12.32"><use href="#clock"/></svg>
<div class="t c" style="left:1047.30px;width:80px;top:339.72px;font-size:4.37px;line-height:5.54px;color:#333">Clock</div>
<div class="a" style="left:1108.5px;top:303px;width:1.4px;height:1.4px;border-radius:50%;background:#666"></div><div class="a" style="left:1108.5px;top:308px;width:1.4px;height:1.4px;border-radius:50%;background:#666"></div>
<div class="t" style="left:947.00px;top:365.44px;font-size:4.60px;color:#222;font-weight:bold;">Recommended</div>
<div class="a" style="left:1081px;top:362px;width:20px;height:9px;border-radius:2.5px;background:#fafafa;box-shadow:0 0 0 .5px #ddd"></div>
<div class="t" style="left:1084.00px;top:365.10px;font-size:4.40px;color:#333;">More ›</div>
<svg class="i" style="left:947.50px;top:379.90px" width="11.00" height="11.00"><use href="#itop"/></svg>
<div class="t" style="left:963.50px;top:381.61px;font-size:4.10px;color:#333;">iTop Easy Desktop</div>
<div class="t" style="left:963.50px;top:387.11px;font-size:4.10px;color:#888;">Recently added</div>
<svg class="i" style="left:1031.25px;top:380.15px" width="10.50" height="10.50"><use href="#gdrive"/></svg>
<div class="t" style="left:1047.00px;top:381.61px;font-size:4.10px;color:#333;">Google Drive</div>
<div class="t" style="left:1047.00px;top:387.11px;font-size:4.10px;color:#888;">Recently added</div>
<div class="a" style="left:843.5px;top:452px;width:271px;height:1px;background:#e2e2e4"></div>
<div class="a" style="left:843.5px;top:453px;width:271px;height:21px;background:#ececee"></div>
<svg class="i" style="left:857.35px;top:459.75px" width="6.50" height="6.50"><use href="#power"/></svg>
<div class="t" style="left:1079.00px;top:462.84px;font-size:4.30px;color:#333;">iED</div>
<svg class="i" style="left:1089.25px;top:458.25px" width="9.50" height="9.50"><use href="#user2"/></svg>
<div class="a" style="left:165px;top:566px;width:288px;height:200px;background:#efeff0;border-radius:7px 7px 0 0;"></div>
<div class="t" style="left:180.40px;top:581.99px;font-size:5.90px;color:#222;font-weight:bold;">All apps</div>
<div class="t" style="left:318.50px;top:581.99px;font-size:5.90px;color:#222;font-weight:bold;">Pinned</div>
<svg class="i" style="left:180.05px;top:616.15px" width="12.50" height="12.50"><use href="#folder"/></svg>
<div class="t" style="left:201.00px;top:620.55px;font-size:5.45px;color:#3a3a3a;">Accessibility</div>
<svg class="i" style="left:180.05px;top:652.15px" width="12.50" height="12.50"><use href="#calculator"/></svg>
<div class="t" style="left:201.00px;top:656.55px;font-size:5.45px;color:#3a3a3a;">Calculator</div>
<svg class="i" style="left:180.05px;top:670.35px" width="12.50" height="12.50"><use href="#calendar"/></svg>
<div class="t" style="left:201.00px;top:674.75px;font-size:5.45px;color:#3a3a3a;">Calendar</div>
<svg class="i" style="left:180.05px;top:688.45px" width="12.50" height="12.50"><use href="#camera"/></svg>
<div class="t" style="left:201.00px;top:692.85px;font-size:5.45px;color:#3a3a3a;">Camera</div>
<svg class="i" style="left:180.05px;top:706.55px" width="12.50" height="12.50"><use href="#clock"/></svg>
<div class="t" style="left:201.00px;top:710.95px;font-size:5.45px;color:#3a3a3a;">Clock</div>
<svg class="i" style="left:180.05px;top:724.25px" width="12.50" height="12.50"><use href="#cortana"/></svg>
<div class="t" style="left:201.00px;top:728.65px;font-size:5.45px;color:#3a3a3a;">Cortana</div>
<svg class="a" style="left:262.5px;top:621px" width="6" height="4"><path d="M.7 .7L3 3 5.3 .7" fill="none" stroke="#777" stroke-width=".8"/></svg>
<svg class="i" style="left:317.90px;top:599.90px" width="15.80" height="15.80"><use href="#edge"/></svg>
<div class="t c" style="left:285.80px;width:80px;top:617.70px;font-size:5.60px;line-height:7.10px;color:#333">Edge</div>
<svg class="i" style="left:360.90px;top:599.90px" width="15.80" height="15.80"><use href="#copilot"/></svg>
<div class="t c" style="left:328.80px;width:80px;top:617.70px;font-size:5.60px;line-height:7.10px;color:#333">Microsoft 365<br>Copilot</div>
<svg class="i" style="left:404.20px;top:599.90px" width="15.80" height="15.80"><use href="#outlook"/></svg>
<div class="t c" style="left:372.10px;width:80px;top:617.70px;font-size:5.60px;line-height:7.10px;color:#333">Outlook</div>
<svg class="i" style="left:317.90px;top:637.90px" width="15.80" height="15.80"><use href="#store"/></svg>
<div class="t c" style="left:285.80px;width:80px;top:655.70px;font-size:5.60px;line-height:7.10px;color:#333">Microsoft Store</div>
<svg class="i" style="left:360.90px;top:637.90px" width="15.80" height="15.80"><use href="#photos"/></svg>
<div class="t c" style="left:328.80px;width:80px;top:655.70px;font-size:5.60px;line-height:7.10px;color:#333">Photos</div>
<svg class="i" style="left:404.20px;top:637.90px" width="15.80" height="15.80"><use href="#settings"/></svg>
<div class="t c" style="left:372.10px;width:80px;top:655.70px;font-size:5.60px;line-height:7.10px;color:#333">Settings</div>
<svg class="i" style="left:317.90px;top:675.40px" width="15.80" height="15.80"><use href="#xbox"/></svg>
<div class="t c" style="left:285.80px;width:80px;top:693.20px;font-size:5.60px;line-height:7.10px;color:#333">Xbox</div>
<svg class="i" style="left:360.90px;top:675.40px" width="15.80" height="15.80"><use href="#solitaire"/></svg>
<div class="t c" style="left:328.80px;width:80px;top:693.20px;font-size:5.60px;line-height:7.10px;color:#333">Solitaire &amp;<br>Casual Games</div>
<svg class="i" style="left:404.20px;top:675.40px" width="15.80" height="15.80"><use href="#spotify"/></svg>
<div class="t c" style="left:372.10px;width:80px;top:693.20px;font-size:5.60px;line-height:7.10px;color:#333">Spotify</div>
<svg class="i" style="left:317.90px;top:713.40px" width="15.80" height="15.80"><use href="#whatsapp"/></svg>
<div class="t c" style="left:285.80px;width:80px;top:731.20px;font-size:5.60px;line-height:7.10px;color:#333">WhatsApp</div>
<svg class="i" style="left:360.90px;top:713.40px" width="15.80" height="15.80"><use href="#clipchamp"/></svg>
<div class="t c" style="left:328.80px;width:80px;top:731.20px;font-size:5.60px;line-height:7.10px;color:#333">Microsoft<br>Clipchamp</div>
<svg class="i" style="left:404.20px;top:713.40px" width="15.80" height="15.80"><use href="#todo"/></svg>
<div class="t c" style="left:372.10px;width:80px;top:731.20px;font-size:5.60px;line-height:7.10px;color:#333">To Do</div>
<div class="a" style="left:438.3px;top:705.5px;width:1.6px;height:1.6px;border-radius:50%;background:#555"></div><div class="a" style="left:438.3px;top:711.5px;width:1.6px;height:1.6px;border-radius:50%;background:#555"></div>
<div class="a" style="left:501.3px;top:565px;width:288.5px;height:200px;background:#efeff0;border-radius:7px 7px 0 0;"></div>
<div class="a" style="left:517px;top:580.2px;width:257.5px;height:13.1px;border-radius:6.5px;background:#fff;box-shadow:0 0 0 .5px #e2e2e4"></div>
<svg class="i" style="left:523.00px;top:583.30px" width="7.00" height="7.00"><use href="#search"/></svg>
<div class="t" style="left:536.00px;top:583.89px;font-size:6.20px;color:#9a9a9e;transform:scaleY(1.12)">Search for apps, settings, and documents</div>
<div class="t" style="left:529.70px;top:614.59px;font-size:5.90px;color:#222;font-weight:bold;">Pinned</div>
<div class="a" style="left:725.7px;top:612.3px;width:34px;height:9.6px;border-radius:3px;background:#fafafa;box-shadow:0 0 0 .5px #e0e0e0"></div>
<div class="t" style="left:729.50px;top:615.16px;font-size:5.40px;color:#333;">All apps &nbsp;›</div>
<svg class="i" style="left:529.50px;top:632.80px" width="15.80" height="15.80"><use href="#edge"/></svg>
<div class="t c" style="left:497.40px;width:80px;top:650.60px;font-size:5.60px;line-height:7.10px;color:#333">Edge</div>
<svg class="i" style="left:572.40px;top:632.80px" width="15.80" height="15.80"><use href="#copilot"/></svg>
<div class="t c" style="left:540.30px;width:80px;top:650.60px;font-size:5.60px;line-height:7.10px;color:#333">Microsoft 365<br>Copilot</div>
<svg class="i" style="left:615.50px;top:632.80px" width="15.80" height="15.80"><use href="#outlook"/></svg>
<div class="t c" style="left:583.40px;width:80px;top:650.60px;font-size:5.60px;line-height:7.10px;color:#333">Outlook</div>
<svg class="i" style="left:659.00px;top:632.80px" width="15.80" height="15.80"><use href="#store"/></svg>
<div class="t c" style="left:626.90px;width:80px;top:650.60px;font-size:5.60px;line-height:7.10px;color:#333">Microsoft Store</div>
<svg class="i" style="left:702.10px;top:632.80px" width="15.80" height="15.80"><use href="#photos"/></svg>
<div class="t c" style="left:670.00px;width:80px;top:650.60px;font-size:5.60px;line-height:7.10px;color:#333">Photos</div>
<svg class="i" style="left:745.30px;top:632.80px" width="15.80" height="15.80"><use href="#settings"/></svg>
<div class="t c" style="left:713.20px;width:80px;top:650.60px;font-size:5.60px;line-height:7.10px;color:#333">Settings</div>
<svg class="i" style="left:529.50px;top:670.30px" width="15.80" height="15.80"><use href="#xbox"/></svg>
<div class="t c" style="left:497.40px;width:80px;top:688.10px;font-size:5.60px;line-height:7.10px;color:#333">Xbox</div>
<svg class="i" style="left:572.40px;top:670.30px" width="15.80" height="15.80"><use href="#solitaire"/></svg>
<div class="t c" style="left:540.30px;width:80px;top:688.10px;font-size:5.60px;line-height:7.10px;color:#333">Solitaire &amp;<br>Casual Games</div>
<svg class="i" style="left:615.50px;top:670.30px" width="15.80" height="15.80"><use href="#spotify"/></svg>
<div class="t c" style="left:583.40px;width:80px;top:688.10px;font-size:5.60px;line-height:7.10px;color:#333">Spotify</div>
<svg class="i" style="left:659.00px;top:670.30px" width="15.80" height="15.80"><use href="#whatsapp"/></svg>
<div class="t c" style="left:626.90px;width:80px;top:688.10px;font-size:5.60px;line-height:7.10px;color:#333">WhatsApp</div>
<svg class="i" style="left:702.10px;top:670.30px" width="15.80" height="15.80"><use href="#clipchamp"/></svg>
<div class="t c" style="left:670.00px;width:80px;top:688.10px;font-size:5.60px;line-height:7.10px;color:#333">Microsoft<br>Clipchamp</div>
<svg class="i" style="left:745.30px;top:670.30px" width="15.80" height="15.80"><use href="#todo"/></svg>
<div class="t c" style="left:713.20px;width:80px;top:688.10px;font-size:5.60px;line-height:7.10px;color:#333">To Do</div>
<svg class="i" style="left:529.50px;top:708.10px" width="15.80" height="15.80"><use href="#linkedin"/></svg>
<div class="t c" style="left:497.40px;width:80px;top:725.90px;font-size:5.60px;line-height:7.10px;color:#333">LinkedIn</div>
<svg class="i" style="left:572.40px;top:708.10px" width="15.80" height="15.80"><use href="#calculator"/></svg>
<div class="t c" style="left:540.30px;width:80px;top:725.90px;font-size:5.60px;line-height:7.10px;color:#333">Calculator</div>
<svg class="i" style="left:615.50px;top:708.10px" width="15.80" height="15.80"><use href="#clock"/></svg>
<div class="t c" style="left:583.40px;width:80px;top:725.90px;font-size:5.60px;line-height:7.10px;color:#333">Clock</div>
<svg class="i" style="left:659.00px;top:708.10px" width="15.80" height="15.80"><use href="#notepad"/></svg>
<div class="t c" style="left:626.90px;width:80px;top:725.90px;font-size:5.60px;line-height:7.10px;color:#333">Notepad</div>
<svg class="i" style="left:702.10px;top:708.10px" width="15.80" height="15.80"><use href="#paint"/></svg>
<div class="t c" style="left:670.00px;width:80px;top:725.90px;font-size:5.60px;line-height:7.10px;color:#333">Paint</div>
<svg class="i" style="left:745.30px;top:708.10px" width="15.80" height="15.80"><use href="#movies"/></svg>
<div class="t c" style="left:713.20px;width:80px;top:725.90px;font-size:5.60px;line-height:7.10px;color:#333">Movies &amp; TV</div>
<div class="a" style="left:838px;top:660px;width:286px;height:100px;border-radius:6px;background:#f0f0f1;border:2.5px solid #d6d9de;box-shadow:inset 0 0 0 1px #f7f7f8"></div>
<div class="a" style="left:851.4px;top:674.8px;width:215px;height:17px;border-radius:4px;background:#e9e9ea;border:1px solid #dfdfe1"></div>
<svg class="i" style="left:858.00px;top:679.80px" width="7.00" height="7.00"><use href="#search"/></svg>
<div class="t" style="left:870.80px;top:680.39px;font-size:6.20px;color:#9a9a9e;transform:scaleY(1.12)">Search for apps, settings, and documents</div>
<div class="a" style="left:1071.5px;top:674.8px;width:18px;height:17.5px;border-radius:3px;background:#f3f3f4;border:1px solid #d6d6d8"></div>
<svg class="i" style="left:1076.75px;top:679.75px" width="7.50" height="7.50"><use href="#power"/></svg>
<div class="a" style="left:1094px;top:674.8px;width:18px;height:17.5px;border-radius:3px;background:#f3f3f4;border:1px solid #d6d6d8"></div>
<div class="t" style="left:1097.00px;top:681.80px;font-size:5.00px;color:#222;">All a</div>
<svg class="i" style="left:859.75px;top:715.25px" width="14.50" height="14.50"><use href="#edge"/></svg>
<svg class="i" style="left:905.15px;top:715.25px" width="14.50" height="14.50"><use href="#copilot"/></svg>
<svg class="i" style="left:950.65px;top:715.25px" width="14.50" height="14.50"><use href="#outlook"/></svg>
<svg class="i" style="left:995.75px;top:715.25px" width="14.50" height="14.50"><use href="#store"/></svg>
<svg class="i" style="left:1041.45px;top:715.25px" width="14.50" height="14.50"><use href="#photos"/></svg>
<svg class="i" style="left:1086.95px;top:715.25px" width="14.50" height="14.50"><use href="#settings"/></svg>
<div class="a lbl" style="left:149px;top:488px;width:320px">Translucent</div>
<div class="a lbl" style="left:485px;top:488px;width:320px">Side by Side</div>
<div class="a lbl" style="left:821px;top:488px;width:320px">Side by Side Reversal</div>
<div class="a" style="left:11px;top:211px;width:114px;height:72px;border-radius:7px;background:linear-gradient(140deg,#6b78f6,#9560ef 50%,#cd4edc)"></div>
<div class="a nav" style="top:100px;font-size:13px">Boxes</div>
<div class="a nav" style="top:178px;font-size:13.1px">Wallpapers</div>
<div class="a nav" style="top:258px;font-size:13px;color:#f6f3fc">Personalization</div>
<div class="a nav" style="top:340px;font-size:13.3px">Widgets</div>
<div class="a nav" style="top:418px;font-size:13.6px">AI Assistant</div>
<svg class="a" style="left:0;top:0" width="140" height="730"><g fill="none" stroke="#f4f4f8" stroke-width="2.1" stroke-linejoin="round" stroke-linecap="round"><path d="M67.6 65.6L79.9 72.8V84.7L67.6 91.8L55.4 84.7V72.8Z M55.4 72.8L67.6 79.2L79.9 72.8 M67.6 79.2V91.8"/><path d="M56 162.6L55.6 147.8L73.4 146.6L73.6 150" /><rect x="59.9" y="150.6" width="20.2" height="16.6"/><rect x="58.1" y="227.8" width="21" height="15.8" rx="1.2"/><path d="M55.6 246.2H81.2" stroke-width="2.4"/><rect x="70" y="310" width="9.2" height="9.8"/><rect x="56.9" y="318" width="9.2" height="10.2"/><path d="M58.5 390.8H78c.9 0 1.4.5 1.4 1.4v11.5c0 .9-.5 1.4-1.4 1.4H64.5L60.5 409v-3.9h-1.6c-.9 0-1.4-.5-1.4-1.4V392.2c0-.9.5-1.4 1.4-1.4z" stroke-width="1.5"/></g><g fill="#f4f4f8"><path d="M60.9 162.6L67.4 156.2L71 159.6L72.6 158.3L79.1 164V166.4H60.9Z"/><circle cx="75" cy="155" r="1.9"/><path d="M80.2 223.5L81.4 224.9L69.6 236.9L66.6 234.2Z"/><path d="M66.2 233.6L70 237.2C69.2 239.6 67 240.2 64 240.2C64.2 237.4 64.4 235 66.2 233.6Z"/><rect x="55.8" y="308.8" width="11.2" height="5.9"/><rect x="68.9" y="323" width="11.4" height="6.2"/><path d="M65.4 382C66.1 386 67.3 387.6 71.5 388.6C67.3 389.6 66.1 391.2 65.4 395.2C64.7 391.2 63.5 389.6 59.3 388.6C63.5 387.6 64.7 386 65.4 382Z"/><path d="M69.8 392.8C70.4 396 71.2 396.8 74.4 397.5C71.2 398.2 70.4 399 69.8 402.2C69.2 399 68.4 398.2 65.2 397.5C68.4 396.8 69.2 396 69.8 392.8Z"/></g></svg>
<div class="a" style="left:106.8px;top:379.7px;width:8.4px;height:8.4px;border-radius:50%;background:#41a8f5"></div>
<div class="a nav" style="top:547px;font-size:12.3px;line-height:15px;color:#d6d6e0"><b>30</b> days<br>remaining</div>
<div class="a" style="left:11px;top:593px;width:116px;height:40px;border-radius:3px;background:#fcc12a;color:#161625;font-size:14px;font-weight:bold;text-align:center;line-height:43px">Activate</div>
<svg class="a" style="left:44px;top:657px" width="48" height="48"><circle cx="24" cy="24" r="24" fill="#5e5d73"/><circle cx="24" cy="17" r="9.2" fill="#b2b1bf"/><path d="M9 40.5C11 33 17 29.8 24 29.8S37 33 39 40.5C35 44 30 45.6 24 45.6S13 44 9 40.5Z" fill="#b2b1bf"/></svg>
</div>
<div class="a" id="frame"></div>
</body></html>
